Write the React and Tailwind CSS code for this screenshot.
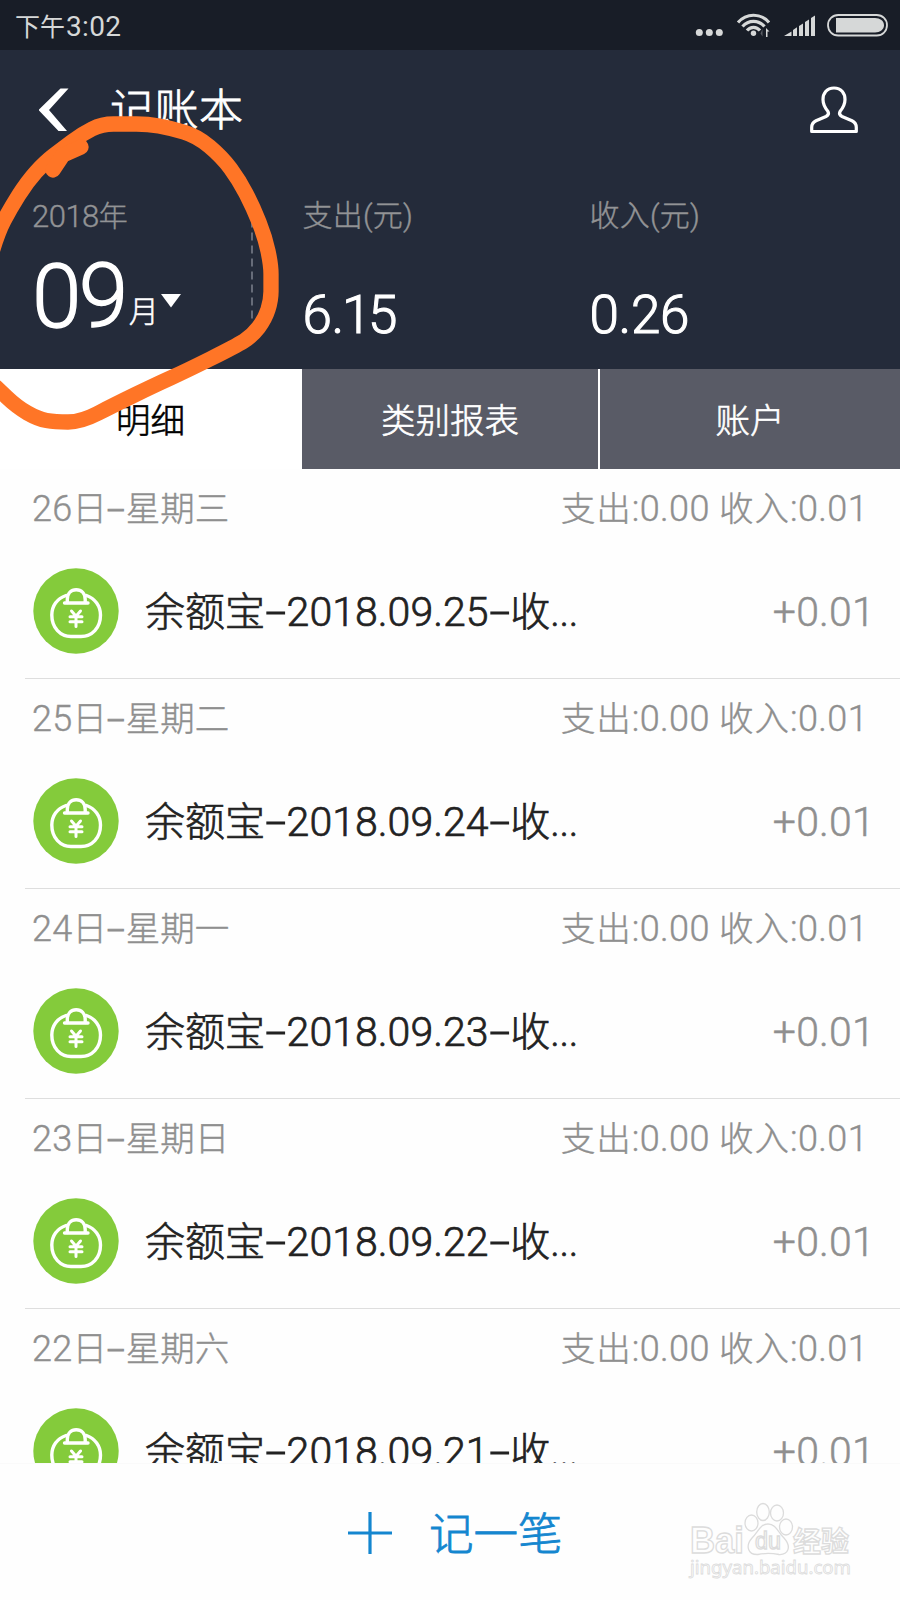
const ROWS = [
  { day: '26', week: '三', date: '2018.09.25' },
  { day: '25', week: '二', date: '2018.09.24' },
  { day: '24', week: '一', date: '2018.09.23' },
  { day: '23', week: '日', date: '2018.09.22' },
  { day: '22', week: '六', date: '2018.09.21' },
];

// Hand-drawn marker loop around the month picker.
const LOOP = [
  [-8, 252], [-2, 232], [10, 209], [27, 182], [45, 162], [62, 149], [82, 134], [102, 124], [125, 124], [148, 124],
  [170, 128], [197, 136], [222, 157], [239, 180], [253, 207], [265, 237], [271, 265], [271, 283], [271, 300],
  [265, 319], [252, 336], [236, 346], [186, 371], [155, 385], [114, 405], [81, 422], [55, 422], [38, 419], [17, 407], [-4, 387],
];

function smoothPath(points) {
  let d = `M${points[0][0]} ${points[0][1]}`;
  for (let i = 1; i < points.length - 1; i++) {
    const [x, y] = points[i];
    const [nx, ny] = points[i + 1];
    d += `Q${x} ${y} ${(x + nx) / 2} ${(y + ny) / 2}`;
  }
  const last = points[points.length - 1];
  return `${d}L${last[0]} ${last[1]}`;
}

function Dash() {
  return (
    <span className="inline-block w-[0.54em] text-center leading-none">
      <span className="inline-block origin-center scale-x-[1.85] [-webkit-text-stroke:0.800px]">-</span>
    </span>
  );
}

function BagIcon() {
  return (
    <svg viewBox="0 0 86 86" className="-mt-[3px] size-[86px] shrink-0">
      <circle cx="43" cy="43" r="42.7" fill="#84cb3b" />
      <g fill="none" stroke="#fff" strokeWidth="3.4" strokeLinecap="round" strokeLinejoin="round">
        <path d="M33 27.500C24 30.500 18.800 38 18.800 47C18.800 60 27.500 68.500 38 68.500H48C59 68.500 67.500 60 67.500 47C67.500 38 62 30.500 53.500 27.500" />
        <path d="M31.500 35H55" />
        <path d="M34.300 34.500V31.500C34.300 25.500 38 21.700 43.200 21.700C48.500 21.700 52.200 25.500 52.200 31.500V34.500" />
        <path d="M38.500 43L43 48.200L47.500 43M37 48.800H49M37 53.800H49M43 48.500V58.500" strokeWidth="3" />
      </g>
    </svg>
  );
}

function StatusBar() {
  return (
    <div className="flex h-[50px] items-center bg-[#181d27] pr-[12px] pl-[15px] text-[#d6d8d8]">
      <div className="flex-1 pt-[3px] text-[25px] leading-[47px]">
        下午<span className="ml-px text-[28px] tracking-[0.300px]">3:02</span>
      </div>
      <svg viewBox="0 0 196 50" className="h-[50px] w-[196px]" fill="#d6d8d8">
        <circle cx="7.300" cy="32.500" r="3.500" />
        <circle cx="17.300" cy="32.500" r="3.500" />
        <circle cx="27.300" cy="32.500" r="3.500" />
        <circle cx="61.500" cy="33.300" r="2.700" />
        <g fill="none" stroke="#d6d8d8" strokeWidth="3.200">
          <path d="M46 22.500C54.500 12.800 68.500 12.800 77 22.500" />
          <path d="M50.500 26.500C56.500 19.700 66.500 19.700 72.500 26.500" />
          <path d="M55 30.600C58.500 26.300 64.500 26.300 68 30.600" />
        </g>
        <path d="M74 28L77.500 31.500H75.500V37H74Z" />
        <path d="M70.500 29V36.500L68.500 33.500Z" opacity="0.35" />
        <path d="M92 36L99.500 31.500V36ZM101 30L105 27.300V36H101ZM107 26L111 23.500V36H107ZM113 22L117 19.500V36H113ZM119 18L123 15.500V36H119Z" />
        <rect x="136" y="15" width="59" height="20.500" rx="10.200" fill="none" stroke="#d6d8d8" strokeWidth="1.800" />
        <path d="M144 18H183C188 18 192 21 192 25.200C192 29.400 188 32.400 183 32.400H144Z" />
      </svg>
    </div>
  );
}

function Header() {
  return (
    <header className="h-[319px] bg-[#242b3a] font-light text-white">
      <div className="flex h-[120px] items-center pr-[42px] pl-[39px]">
        <svg viewBox="0 0 30 44" className="h-[44px] w-[30px]" fill="#fff">
          <path d="M21.500 0.500H29.500L10 22L28 43H19.500L-0.500 22Z" />
        </svg>
        <h1 className="ml-[41px] flex-1 pt-[2px] text-[44px] leading-[60px] tracking-[0.500px] [-webkit-text-stroke:0.800px]">记账本</h1>
        <svg viewBox="0 0 48 48" className="size-[48px]" fill="none" stroke="#fff" strokeWidth="3.200" strokeLinejoin="round">
          <path d="M24 2C16.500 2 13 7.500 13 13.500C13 19 15.500 22.500 18 25.500C19 27.500 18.300 29.300 16 30.500L6 34.800C3 36.300 1.700 38.500 1.700 41.500V45.500H46.300V41.500C46.300 38.500 45 36.300 42 34.800L32 30.500C29.700 29.300 29 27.500 30 25.500C32.500 22.500 35 19 35 13.500C35 7.500 31.500 2 24 2Z" />
        </svg>
      </div>
      <div className="flex h-[199px]">
        <div className="flex w-[302.500px] pl-[32px]">
          <div className="w-[219px]">
            <div className="mt-[27px] text-[29px] leading-[40px] text-[#929395] [-webkit-text-stroke:0.400px]">
              <span className="text-[31px] tracking-[-0.500px]">2018</span>年
            </div>
            <div className="mt-[5px] flex h-[110px] items-baseline">
              <span className="text-[89px] leading-[110px] tracking-[-2.500px] [-webkit-text-stroke:1.300px]">09</span>
              <span className="relative -top-[5px] ml-[3px] text-[30px] [-webkit-text-stroke:0.500px]">月</span>
              <svg viewBox="0 0 20 14" className="mt-[7px] ml-[2px] h-[14px] w-[20px] self-center" fill="#fff">
                <path d="M0 0H20L10 13.500Z" />
              </svg>
            </div>
          </div>
          <svg viewBox="0 0 2 110" className="mt-[44px] h-[110px] w-[2px]">
            <path d="M1 5.500V106" stroke="#8b909b" strokeWidth="1.300" strokeDasharray="8 5" />
          </svg>
        </div>
        <div className="w-[287px]">
          <div className="mt-[26px] text-[30px] leading-[40px] tracking-[0.200px] text-[#929395] [-webkit-text-stroke:0.400px]">支出(元)</div>
          <div className="mt-[49px] text-[53px] leading-[60px] [-webkit-text-stroke:1.100px]">
            <span className="tracking-[-0.500px]">6</span><span className="tracking-[-2px]">.</span><span className="tracking-[-3.500px]">1</span>5
          </div>
        </div>
        <div>
          <div className="mt-[26px] text-[30px] leading-[40px] tracking-[0.200px] text-[#929395] [-webkit-text-stroke:0.400px]">收入(元)</div>
          <div className="mt-[49px] text-[53px] leading-[60px] tracking-[-0.300px] [-webkit-text-stroke:1.100px]">0.26</div>
        </div>
      </div>
    </header>
  );
}

function Tabs() {
  return (
    <nav className="flex h-[100px] text-center text-[34.500px] leading-[104px] font-light text-white [-webkit-text-stroke:0.600px]">
      <div className="w-[301px] bg-white text-black">明细</div>
      <div className="ml-px w-[296px] bg-[#595b66]">类别报表</div>
      <div className="ml-[2px] flex-1 bg-[#595b66]">账户</div>
    </nav>
  );
}

function Row({ day, week, date }) {
  return (
    <section className="h-[210px] shrink-0 font-light">
      <div className="flex h-[78px] items-center justify-between pt-[2px] pr-[32px] pl-[32px] text-[34.500px] text-[#8f8f8f] [-webkit-text-stroke:0.400px]">
        <div>
          <span className="text-[36px] tracking-[0.300px]">{day}</span>日<Dash />星期{week}
        </div>
        <div className="tracking-[1px]">
          支出<span className="text-[36px] tracking-[0.400px]">:0.00 </span>收入<span className="text-[36px] tracking-[0.400px]">:0.01</span>
        </div>
      </div>
      <div className="ml-[25px] flex h-[132px] items-center border-b border-[#dedede] pr-[25px] pl-[8px]">
        <BagIcon />
        <div className="ml-[26px] flex-1 pt-px text-[40px] text-[#222] [-webkit-text-stroke:0.700px]">
          余额宝<Dash />
          <span className="text-[41px] tracking-[0.050px]">{date}</span>
          <Dash />收<span className="tracking-[-0.300px]">...</span>
        </div>
        <div className="pt-px text-[41px] tracking-[0.200px] text-[#8f8f8f] [-webkit-text-stroke:0.500px]">+0.01</div>
      </div>
    </section>
  );
}

function Watermark() {
  return (
    <svg viewBox="0 0 170 90" className="absolute top-[36px] left-[685px] h-[90px] w-[170px]" fill="#fefefe" stroke="#dcdcdc" strokeWidth="1.300">
      <text x="5" y="53" fontFamily="Liberation Sans" fontWeight="700" fontSize="36" textLength="54" lengthAdjust="spacingAndGlyphs">Bai</text>
      <ellipse cx="66.500" cy="23" rx="6.500" ry="8" />
      <ellipse cx="78" cy="12" rx="6.300" ry="8.500" />
      <ellipse cx="92" cy="13" rx="6.500" ry="8" />
      <ellipse cx="101" cy="27" rx="6.500" ry="8" />
      <path d="M83 24C91 24 93 32 99 38C107 47 103 55 94 54.500C86 53 80 53 73 54.500C63 55 60 46 67 38C73 32 75 24 83 24Z" />
      <text x="70" y="49" fontFamily="Liberation Sans" fontSize="23" textLength="26" lengthAdjust="spacingAndGlyphs">du</text>
      <text x="108" y="52" fontFamily="Noto Sans CJK SC" fontWeight="700" fontSize="28" textLength="56" lengthAdjust="spacingAndGlyphs">经验</text>
      <text x="5" y="74" fontFamily="Noto Sans" fontSize="18" strokeWidth="0.800" textLength="161" lengthAdjust="spacingAndGlyphs">jingyan.baidu.com</text>
    </svg>
  );
}

export default function App() {
  return (
    <div className="relative flex h-[1600px] w-[900px] flex-col overflow-hidden bg-[#fefefe] font-['Roboto','Noto_Sans_CJK_SC',sans-serif]">
      <StatusBar />
      <Header />
      <Tabs />
      <main className="flex h-[994px] flex-col overflow-hidden">
        {ROWS.map((r) => (
          <Row key={r.day} {...r} />
        ))}
      </main>
      <footer className="relative flex flex-1 border-t border-[#fafafa] bg-[#fefefe] pl-[348px] text-[#1486cf]">
        <svg viewBox="0 0 44 44" className="mt-[47px] size-[44px]" stroke="#1486cf" strokeWidth="3.200">
          <path d="M0 22H44M22 1V43" />
        </svg>
        <div className="mt-[39px] ml-[37px] text-[44.500px] leading-[64px] font-light [-webkit-text-stroke:0.800px]">记一笔</div>
        <Watermark />
      </footer>
      <svg viewBox="0 0 300 450" className="pointer-events-none absolute top-0 left-0 h-[450px] w-[300px]" fill="none" stroke="#ff7526" strokeWidth="15.300" strokeLinecap="round" strokeLinejoin="round">
        <path d={smoothPath(LOOP)} />
        <path d="M53 170L63 155L81 147" />
      </svg>
    </div>
  );
}
